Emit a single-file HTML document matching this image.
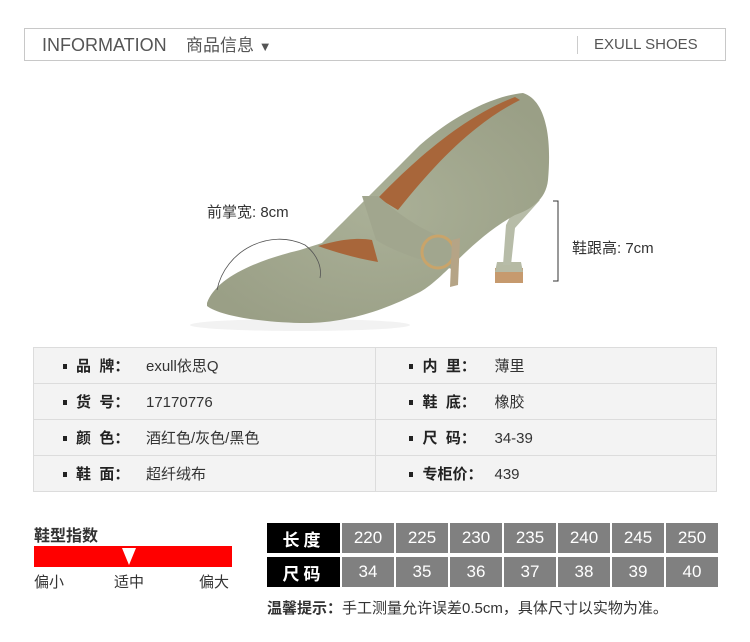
<!DOCTYPE html>
<html><head><meta charset="utf-8"><style>
*{margin:0;padding:0;box-sizing:border-box}
body{width:750px;height:642px;background:#fff;position:relative;overflow:hidden;font-family:"Liberation Sans","Noto Sans CJK SC",sans-serif;color:#333}
.a{position:absolute;white-space:nowrap}
.hdr{left:24px;top:28px;width:702px;height:33px;border:1px solid #c8c8c8}
table.info{position:absolute;left:33px;top:347px;width:684px;border-collapse:collapse;background:#f3f3f3}
table.info td{border:1px solid #dcdcdc;height:36px;font-size:15px;padding-left:42px;color:#333;position:relative;width:50%}
table.info td.r{padding-left:47px}
table.info td b{font-weight:bold;color:#222;display:inline-block;width:70px}
table.info td.r b{width:72px}
table.info td:before{content:"";position:absolute;left:29px;top:16px;width:4px;height:5px;background:#222}
table.info td.r:before{left:33px}
.sz{position:absolute;left:265px;top:519px;border-collapse:separate;border-spacing:2px 4px}
.sz td{height:30px;width:52px;background:#808080;color:#fff;text-align:center;font-size:17px}
.sz td.k{background:#000;width:73px;font-weight:bold;font-size:17px;letter-spacing:4px}
</style></head><body>
<div class="a hdr"></div>
<div class="a" style="left:42px;top:35px;font-size:18px;color:#555">INFORMATION</div>
<div class="a" style="left:186px;top:31px;font-size:17px;color:#555">商品信息 <span style="font-size:13px">▼</span></div>
<div class="a" style="left:577px;top:36px;width:1px;height:18px;background:#ccc"></div>
<div class="a" style="left:594px;top:36px;font-size:15px;color:#555">EXULL SHOES</div>

<svg class="a" style="left:0;top:60px" width="750" height="285" viewBox="0 60 750 285">
<defs><radialGradient id="g" cx="0.5" cy="0.5" r="0.6"><stop offset="0" stop-color="#aab097"/><stop offset="1" stop-color="#9a9f86"/></radialGradient></defs>
<ellipse cx="300" cy="325" rx="110" ry="6" fill="#f2f2f2"/>
<path d="M495 268 L523 268 L523 283 L495 283 Z" fill="#c69a6e"/>
<path d="M497 262 L521 262 L523 272 L495 272 Z" fill="#b6baa4"/>
<path d="M516 205 L540 200 L515 228 L511 265 L503 265 L506 225 Z" fill="#b7bca8"/>
<path d="M207 303 C215 280 250 262 300 250 L322 243 C340 225 370 195 420 145 C460 110 500 95 523 93 C545 100 552 135 548 180 C546 200 530 210 515 215 C470 240 445 278 420 292 C385 310 345 324 300 323 C260 322 220 316 207 306 Z" fill="url(#g)"/>
<path d="M318 246 C345 238 360 238 372 240 L378 262 C355 258 335 252 318 246 Z" fill="#a8663a"/>
<path d="M378 198 C410 165 460 118 515 97 L520 100 C470 125 430 170 398 210 Z" fill="#a8663a"/>
<path d="M362 196 L378 196 C400 215 420 230 450 240 L455 270 C430 262 400 255 376 240 Z" fill="#a1a68e"/>
<circle cx="438" cy="252" r="16" fill="none" stroke="#c9a46a" stroke-width="3"/>
<path d="M452 240 L460 238 L458 285 L450 287 Z" fill="#b5a486"/>
<path d="M217 290 C225 250 270 228 305 245 C318 255 322 268 320 278" fill="none" stroke="#555" stroke-width="0.8"/>
<path d="M553 201 L558 201 L558 281 L553 281" fill="none" stroke="#333" stroke-width="1"/>
</svg>
<div class="a" style="left:207px;top:201px;font-size:15px;color:#333">前掌宽: 8cm</div>
<div class="a" style="left:572px;top:237px;font-size:15px;color:#333">鞋跟高: 7cm</div>

<table class="info">
<tr><td><b>品&nbsp;&nbsp;牌：</b>exull依思Q</td><td class="r"><b>内&nbsp;&nbsp;里：</b>薄里</td></tr>
<tr><td><b>货&nbsp;&nbsp;号：</b>17170776</td><td class="r"><b>鞋&nbsp;&nbsp;底：</b>橡胶</td></tr>
<tr><td><b>颜&nbsp;&nbsp;色：</b>酒红色/灰色/黑色</td><td class="r"><b>尺&nbsp;&nbsp;码：</b>34-39</td></tr>
<tr><td><b>鞋&nbsp;&nbsp;面：</b>超纤绒布</td><td class="r"><b>专柜价：</b>439</td></tr>
</table>

<div class="a" style="left:34px;top:522px;font-size:16px;font-weight:bold;color:#333">鞋型指数</div>
<div class="a" style="left:34px;top:546px;width:198px;height:21px;background:#f00"></div>
<svg class="a" style="left:122px;top:548px" width="14" height="17"><path d="M0 0 L14 0 L7 17 Z" fill="#fff"/></svg>
<div class="a" style="left:34px;top:571px;font-size:15px;color:#333">偏小</div>
<div class="a" style="left:114px;top:571px;font-size:15px;color:#333">适中</div>
<div class="a" style="left:199px;top:571px;font-size:15px;color:#333">偏大</div>

<table class="sz">
<tr><td class="k">长度</td><td>220</td><td>225</td><td>230</td><td>235</td><td>240</td><td>245</td><td>250</td></tr>
<tr><td class="k">尺码</td><td>34</td><td>35</td><td>36</td><td>37</td><td>38</td><td>39</td><td>40</td></tr>
</table>
<div class="a" style="left:267px;top:597px;font-size:15px;color:#333"><b>温馨提示：</b>手工测量允许误差0.5cm，具体尺寸以实物为准。</div>
</body></html>
